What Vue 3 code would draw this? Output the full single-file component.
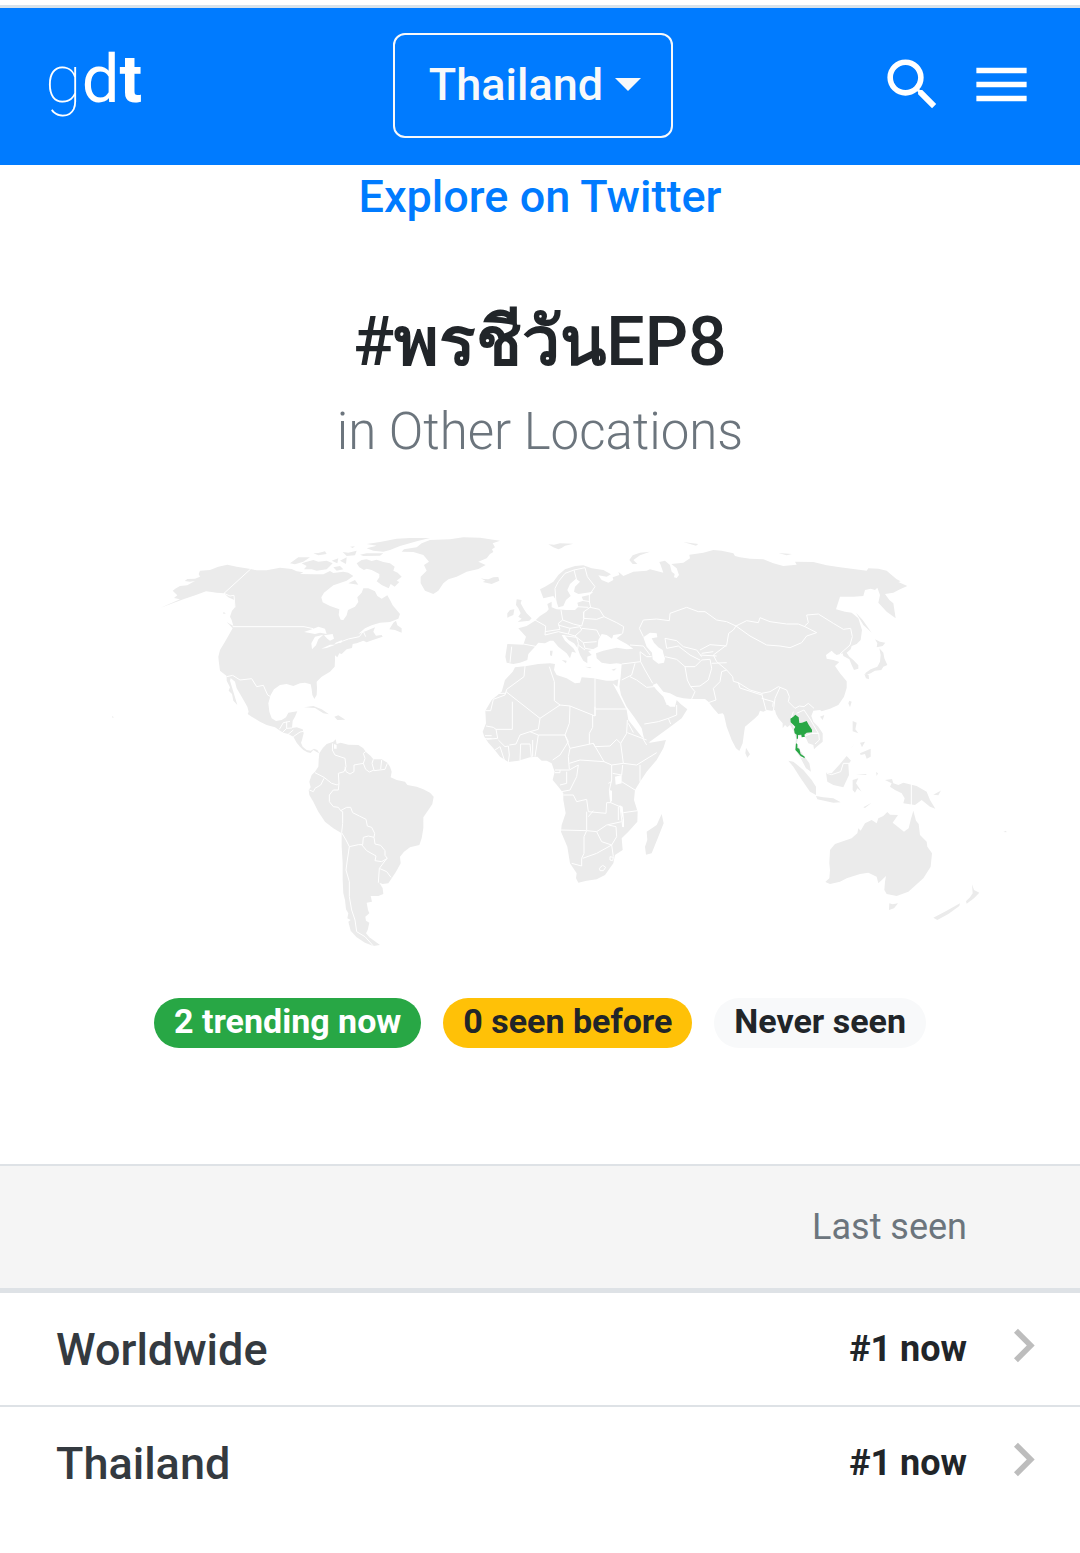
<template>
    <div class="page">
        <!-- Navbar -->
        <header class="navbar">
            <a href="#" class="brand"><span class="thin">g</span>d<b>t</b></a>
            <button type="button" class="location-toggle">
                Thailand
                <span class="caret"></span>
            </button>
            <div class="actions">
                <button type="button" class="icon-button" aria-label="Search">
                    <svg viewBox="0 0 24 24">
                        <path d="M15.5 14h-.79l-.28-.27A6.47 6.47 0 0 0 16 9.5 6.5 6.5 0 1 0 9.5 16c1.61 0 3.09-.59 4.23-1.57l.27.28v.79l5 4.99L20.49 19l-4.99-5zm-6 0C7.01 14 5 11.99 5 9.5S7.01 5 9.5 5 14 7.01 14 9.5 11.99 14 9.5 14z" />
                    </svg>
                </button>
                <button type="button" class="icon-button" aria-label="Menu">
                    <svg viewBox="0 0 24 24">
                        <path d="M3 18h18v-2H3v2zm0-5h18v-2H3v2zm0-7v2h18V6H3z" />
                    </svg>
                </button>
            </div>
        </header>

        <main>
            <a href="#" class="explore">Explore on Twitter</a>

            <h1>#<b>พรชีวัน</b>EP8</h1>
            <p class="subtitle">in Other Locations</p>

            <!-- World map -->
            <svg class="map" viewBox="-180 0 3000 1320" role="img" aria-label="World map">
                <g v-for="region in regions" :key="region.name" :transform="`translate(${region.x} ${region.y})`">
                    <path class="land" :d="region.land" />
                    <path v-if="region.water" class="water" :d="region.water" />
                    <path v-if="region.borders" class="border" :d="region.borders" />
                    <path v-if="region.trending" class="trending" :d="region.trending" />
                </g>
            </svg>

            <!-- Legend -->
            <div class="legend">
                <span v-for="badge in badges" :key="badge.type" class="badge" :class="badge.type">{{ badge.label }}</span>
            </div>

            <table class="locations">
                <thead>
                    <tr>
                        <th></th>
                        <th class="seen">Last seen</th>
                        <th class="go"></th>
                    </tr>
                </thead>
                <tbody>
                    <tr v-for="location in locations" :key="location.name">
                        <td class="name"><a href="#">{{ location.name }}</a></td>
                        <td class="seen">{{ location.seen }}</td>
                        <td class="go">
                            <a href="#" :aria-label="`Open ${location.name}`">
                                <svg viewBox="0 0 24 24">
                                    <path d="M10 6 8.59 7.41 13.17 12l-4.58 4.59L10 18l6-6z" />
                                </svg>
                            </a>
                        </td>
                    </tr>
                </tbody>
            </table>
        </main>
    </div>
</template>

<script setup>
const badges = [
    { type: 'success', label: '2 trending now' },
    { type: 'warning', label: '0 seen before' },
    { type: 'light', label: 'Never seen' },
];

const locations = [
    { name: 'Worldwide', seen: '#1 now' },
    { name: 'Thailand', seen: '#1 now' },
];

// Map shapes, every region has its own origin
const regions = [
    {
        name: 'north-america',
        x: 0,
        y: 0,
        land: `M218,212 228,205 240,198 262,196 275,188 285,183 270,185 254,183 262,177 285,176 300,170 296,162 300,152 330,150 355,140
            382,134 410,140 452,147 470,151 500,151 540,143 575,147 590,154 610,157 600,162 640,163 670,163 690,153 700,159 730,155 745,158
            760,168 740,182 718,190 700,196 685,208 672,218 664,232 668,247 690,258 718,268 716,285 722,299 730,300 740,286 744,270 765,260
            775,246 772,232 785,218 790,205 805,205 825,214 832,228 845,236 862,226 870,240 878,256 890,270 900,282 895,296 870,306 840,308
            815,316 795,325 775,342 800,332 825,322 820,335 828,347 845,345 848,350 812,362 800,367 790,362 770,370 758,372 756,384 740,388 725,402
            718,400 712,412 705,406 705,420 704,440 690,455 665,470 650,485 651,505 650,525 643,537 637,525 635,508 632,493 615,488 600,490
            580,498 560,492 540,495 522,508 512,525 505,550 508,575 515,595 528,603 545,600 558,592 565,578 592,574 585,590 578,602 576,624
            590,622 608,628 611,640 606,660 603,668 608,680 620,690 632,692 642,686 652,690 658,700 650,696 640,690 632,699 622,697 610,690
            600,680 590,668 580,650 565,642 550,638 540,632 525,622 500,615 480,605 455,590 443,582 446,575 442,560 425,530 410,505 405,485
            392,474 390,482 400,515 412,555 400,542 396,522 386,512 390,502 380,482 380,468 360,452 357,430 355,410 360,390 375,365 392,335
            398,325 380,306 400,318 395,300 390,290 396,272 405,262 403,240 385,232 372,220 350,218 335,216 318,214 290,224 250,238 180,264 240,238
            222,234 232,226Z
            M800,85 830,77 800,72 840,66 890,56 930,54 990,54 950,64 900,78 870,90 850,95 820,92Z M770,130 785,120 800,118 815,123 830,119 850,126 870,130
            884,140 880,152 893,158 905,170 890,182 898,186 884,200 872,192 866,205 845,195 830,184 838,172 838,162 815,150 800,146 792,150 778,142Z M605,130 618,126 640,120
            655,125 680,122 698,130 690,138 680,148 650,152 635,148 612,148 620,138Z M570,130 595,112 630,112 610,125 585,133Z M695,122 715,115 712,130Z M720,122
            740,112 738,132Z M640,100 655,99 675,94 680,102 655,106Z M700,142 720,138 730,148 710,152Z M728,96 745,98 770,92 765,106 740,108Z M780,104 800,100 850,100 840,107 790,108Z M750,80
            765,79 758,84Z M745,190 765,180 775,194Z M868,328 880,308 888,302 892,316 905,325 905,338 885,330Z M612,562 640,558
            665,568 687,583 670,580 645,564Z M703,590 715,586 736,599 712,600Z M745,600 756,602Z M658,600 670,604Z M36,588 42,592
            37,593Z M370,276 378,280 370,282Z M905,95 912,88 950,82 965,70 990,60 1050,58 1090,52 1140,53 1200,62 1178,70 1185,82
            1176,88 1180,96 1170,102 1160,115 1135,125 1157,135 1135,147 1100,155 1070,170 1045,178 1030,190 1015,212 1000,222 975,212 962,190 962,170
            980,152 972,135 987,125 970,105 940,96Z`,
        water: `M612,336 640,326 655,320 675,326 680,342 660,338 645,342Z M636,388 634,370 645,350 670,344 655,358 648,376Z
            M672,346 698,342 702,356 690,362 682,356Z M664,386 690,374 706,374 680,384Z M704,370 726,360 724,368Z`,
        borders: `M452,147 372,220 390,228 402,226 405,262 M398,320H612L640,326 M704,372 745,357 778,350 790,334 797,350
            M380,470 398,466 420,480 455,476 470,500 490,496 503,525 512,530 M538,628 550,608 570,604 M560,605 560,625 576,624
            M545,640 560,625 M562,645 580,630 M580,650 600,636 611,634`,
    },
    {
        name: 'south-america',
        x: 0,
        y: 540,
        land: `M658,160 668,145 680,132 700,125 707,118 710,132 722,128 745,134 775,135 790,145 797,155 812,168 820,178 845,178
            862,188 870,200 875,215 872,232 890,240 915,245 922,255 950,260 970,268 990,278 1001,290 997,312 985,330 970,352 970,385 965,415
            958,435 930,442 912,455 900,470 902,490 888,515 875,535 865,550 848,552 838,548 848,565 850,582 835,588 812,588 816,605 800,608
            804,630 808,640 796,650 798,662 808,668 803,690 798,700 808,712 840,735 820,738 795,728 770,712 752,692 745,665 752,660 742,655
            745,640 738,628 735,600 730,580 728,540 728,490 725,440 725,400 700,385 675,365 655,335 640,305 628,285 626,270 632,262 628,245
            635,225 645,215 655,200 656,180Z`,
        water: 'M702,132 710,135 710,146 702,146Z',
        borders: `M698,130 697,150 705,165 735,175 738,200 732,215 715,220 717,250 712,255 695,250 672,232 645,218 M672,235
            662,255 645,265 640,275 628,270 M717,250 715,270 700,270 688,285 688,305 700,320 715,322 722,332 728,335 728,370 725,398
            M722,332 740,322 752,322 758,338 778,348 798,358 802,378 815,382 824,400 822,412 M725,398 738,420 748,440 775,434 788,434
            790,412 805,408 822,412 825,432 842,436 855,452 855,466 862,475 845,485 825,482 828,468 800,452 785,434 M748,440 742,480
            738,510 748,545 748,590 755,630 765,660 770,695 795,710 820,738 M860,476 838,505 835,548 M838,505 860,515 873,532 M735,200
            738,215 750,222 762,215 762,195 790,190 795,175 790,160 797,155 M790,190 797,208 808,216 822,210 816,190 820,178 M822,212 855,208
            862,190 M845,180 842,207`,
    },
    {
        name: 'eurasia',
        x: 1050,
        y: 0,
        land: `M270,208 285,200 310,185 325,165 345,148 375,138 400,136 425,145 460,150 483,163 470,170 445,166 455,180 475,188
            490,180 488,172 508,165 505,155 520,168 550,155 590,152 600,148 640,158 632,135 628,126 645,122 660,135 665,155 674,162 672,172
            680,174 687,165 680,145 664,132 700,128 720,115 718,104 760,98 790,90 815,92 850,100 855,108 870,112 900,116 940,118
            970,130 1000,138 1040,134 1035,125 1090,126 1130,136 1170,142 1250,152 1255,145 1285,146 1310,152 1340,178 1352,184 1345,186 1372,198 1350,208
            1330,218 1305,222 1318,240 1330,250 1337,295 1310,275 1285,248 1290,225 1282,203 1275,210 1262,206 1245,210 1240,228 1210,230
            1170,230 1158,268 1185,275 1205,278 1225,295 1236,330 1232,360 1220,372 1205,378 1202,388 1190,398 1198,410 1210,420 1225,436
            1225,446 1212,450 1205,435 1198,418 1180,408 1178,400 1160,405 1152,400 1145,392 1128,405 1130,416 1150,420 1168,426 1155,438
            1170,460 1190,484 1190,504 1182,530 1165,555 1140,566 1115,574 1110,570 1090,572 1084,588 1090,605 1105,620 1118,640 1118,665
            1100,680 1092,688 1090,675 1075,670 1068,655 1060,648 1046,648 1040,670 1050,690 1065,712 1078,730 1083,755 1068,745 1055,720
            1040,695 1036,675 1038,655 1032,635 1020,615 1012,622 1005,615 998,625 998,610 985,595 978,582 975,570 965,572 950,570 940,575
            930,572 925,585 915,595 885,620 882,640 878,670 868,693 858,685 845,660 830,620 822,585 818,580 805,582 790,565 775,545 765,537
            725,537 700,535 680,530 660,520 640,515 620,490 608,495 620,510 640,530 648,550 660,560 675,560 680,540 692,552 712,568 695,595
            655,625 590,672 583,660 575,625 555,595 530,560 513,525 508,500 512,470 515,432 500,430 480,432 455,428 440,415 438,400 460,392
            500,383 530,388 550,386 530,372 508,360 500,355 520,340 505,343 490,345 486,356 470,345 455,342 445,360 443,380 425,390 415,394
            425,405 412,410 412,430 400,422 390,405 383,385 372,370 355,360 343,345 335,345 345,362 370,385 378,398 366,395 360,415 350,400
            325,380 310,362 300,362 285,370 265,368 255,380 235,402 232,420 210,428 190,432 170,428 166,410 172,372 220,374 228,350 205,325
            230,318 255,302 270,288 290,275 296,268 292,252 305,245 305,262 320,268 350,270 375,270 385,260 382,248 400,242 395,230 420,224
            430,215 385,222 372,215 375,200 390,185 378,176 360,192 352,210 362,228 348,240 340,258 325,262 318,240 310,228 280,235Z
            M200,238 215,240 212,250 222,268 230,280 245,295 238,302 203,306 215,296 205,290 212,280 205,265 198,255Z M180,270 193,268
            190,285 172,293 172,280Z M92,175 102,177 115,178 130,172 145,171 148,182 125,192 98,186 106,182Z M295,73 312,74 330,70 370,71 345,77 335,84 325,88 310,82Z M600,95 570,98
            548,106 538,120 548,132 562,132 550,120 570,106Z M335,420 350,422 348,430Z M300,392 308,392 306,408 300,406Z M405,440 425,442
            420,445Z M484,449 500,445 492,452Z M700,66 745,72 738,77Z M760,78 775,80Z M985,99 1026,102 1010,106Z M1275,358 1290,365 1306,368
            1298,378 1280,382 1282,370Z M1288,385 1300,398 1303,415 1312,435 1300,440 1294,450 1275,452 1262,460 1250,464 1245,460 1262,448 1282,440 1290,425 1292,405Z M1243,462
            1256,465 1257,478 1248,475Z M1218,278 1238,300 1265,338 1240,315Z M1272,332 1280,338Z M1198,542 1205,545 1200,562 1195,550Z
            M1110,590 1123,585 1118,600Z M888,683 900,703 892,713 886,700Z`,
        water: `M580,352 600,338 620,340 622,352 605,355 612,368 625,382 638,390 640,400 645,415 642,428 625,431 608,418 606,398
            590,380Z`,
        borders: `M400,295 440,298 462,290 500,308 521,320 518,340 M400,295 402,275 420,262 448,268 462,290 M580,350 568,325
            580,300 620,297 658,302 660,280 710,262 745,275 765,275 800,300 830,305 858,318 890,302 925,308 930,293 960,305 1010,312
            1045,312 1065,320 1100,338 1070,348 1055,368 1020,383 990,378 950,375 900,348 858,318 M1064,318 1075,308 1070,285 1105,282
            1150,310 1180,328 1202,325 1207,350 1200,375 1170,402 M858,318 850,330 836,340 830,375 790,405 800,425 830,450 848,470 850,484
            865,488 900,510 935,520 960,515 985,500 1010,510 1018,530 1015,545 1035,565 1048,558 1062,560 1075,550 1092,565 M935,520
            940,540 948,570 M935,535 970,545 968,560 M990,502 975,535 970,575 M865,488 870,504 935,525 M830,450 815,455 810,485 790,505 798,540
            775,548 M705,440 735,440 755,420 780,418 785,445 775,480 750,498 722,500 712,480 705,440 M722,500 735,515 725,537 M645,410
            680,418 705,440 M650,385 645,355 680,362 700,380 740,390 755,410 M650,385 685,378 720,405 750,420 M750,390 780,374 830,378
            M755,400 790,395 M750,405 800,408 M785,430 830,428 M570,395 572,425 515,432 M540,375 580,378 600,405 M570,395 590,410 605,410 M572,425
            585,450 608,490 M555,430 545,465 515,480 M540,470 560,480 590,502 612,500 M583,612 625,605 655,595 680,585 680,555 M655,595
            662,612 M648,552 675,558 M318,250 315,205 325,185 345,160 372,150 380,180 M372,150 405,143 412,170 435,200 420,222 M285,345 287,318
            255,300 M220,372 262,380 M185,380 180,428 M333,270 338,300 325,310 330,328 285,335 M338,300 370,312 395,318 402,295
            400,275 M285,345 325,335 355,342 360,325 325,315 M355,342 375,348 395,330 390,320 360,325 M395,325 440,330 450,350 M375,348
            400,368 440,365 M340,347 380,352 385,370 383,388 M400,368 405,385 435,390 M385,375 405,390 M390,240 420,245 M380,260 415,262 M418,222 418,245
            422,262 M1040,580 1062,570 1082,600 1105,640 1085,640 1060,650 M1085,640 1106,640 1108,660 1095,672 M1030,575 1022,600 1034,625 M1052,712 1066,712`,
    },
    {
        name: 'africa',
        x: 1050,
        y: 360,
        land: `M195,82 230,78 265,72 300,70 315,72 312,90 320,105 350,115 375,130 390,128 395,112 430,115 470,122 490,122 505,118
            502,140 488,130 510,170 530,210 535,240 555,265 575,290 588,302 600,308 648,300 640,325 620,360 590,395 570,425 555,450 552,480
            563,515 562,545 535,575 515,595 518,630 495,645 490,670 465,705 440,718 410,722 385,728 378,715 380,700 360,670 352,620 333,575
            335,555 347,520 340,480 340,460 325,440 308,420 314,395 305,370 290,362 275,362 262,350 240,352 205,362 175,366 150,350 130,325
            115,308 103,290 98,275 108,250 106,212 125,180 155,155 165,120 188,95Z M635,522 641,550 625,590 605,640 588,644 585,620 592,600
            590,575 620,555Z`,
        water: `M495,410 515,405 515,430 497,434Z M478,450 486,452 486,486 480,478Z M508,495 518,500 522,540 522,562 516,560 518,535Z`,
        borders: `M225,78 222,110 170,148 165,165 130,178 122,212H106 M168,155 270,235 330,195 313,182V125L298,80 M145,160H168
            M330,195 360,198 435,228V115 M437,207H530 M435,228V200 M428,225 428,262 418,280 418,312 M187,185V268H138L130,262 108,258
            M270,235 265,268 240,275 210,285 198,312 178,315 M138,268 143,295 110,298 M360,198 358,250 345,285 265,285 240,275 M265,285
            255,350 M345,285 360,325 430,310 435,320 480,318 500,298 512,310 530,280 532,240 M345,285 355,305 330,345 308,360 M360,325 355,350 358,388
            M430,310 462,365 485,375 520,370 512,310 M358,370 390,360 462,365 M485,375 485,420 478,450 482,488 510,500 518,560 M315,390H358L385,375
            380,410 360,450 335,455 M315,398H330V390 M350,395 350,430 330,435 M340,465H370L380,485 410,478 415,515 468,520 470,488 482,488
            M410,515V570 M333,570 410,572 440,575 470,555 515,545 M410,572 402,590V640L395,655V678L365,670 M398,655 440,640 485,615
            490,650 M440,575 455,605 485,615 500,590 498,560 475,555 M415,530 430,512 M505,500 505,540 M520,518 563,512 M520,370 560,375
            620,338 M532,278 590,300 M570,375V425 M515,425 555,450 M488,400 515,405 518,375 M535,250 550,278 M578,295 590,315 M210,360 212,312H240L244,352 M248,300V350 M175,318
            178,345 175,366 M145,300 165,320 175,318 M135,330 150,320 165,366 M105,287H125 M105,296H125 M475,430 485,425 M448,685
            458,676 467,682 460,692 450,692Z M480,650 490,652 488,662 480,660Z`,
    },
    {
        name: 'oceania',
        x: 1800,
        y: 510,
        land: `M376,576 388,565 390,540 388,520 390,480 405,462 455,445 472,430 475,415 482,422 495,400 515,390 530,400 535,385
            550,378 562,366 570,374 594,375 578,398 612,425 626,415 632,390 640,362 648,392 656,402 660,435 680,455 682,470 696,490 692,530
            670,565 625,605 590,618 560,612 553,600 555,575 558,558 535,580 530,560 505,548 480,552 440,565 420,575 390,582Z M568,640
            578,643 594,640 582,655 567,660Z M700,683 740,662 780,640 778,648 745,672 712,690Z M816,583 822,600 838,608 822,625 800,641 798,634 810,622
            818,610Z M555,270 576,267 580,280 595,285 610,278 650,288 680,305 690,330 706,356 690,350 665,330 645,345 610,340 614,325
            605,310 585,300 570,290 575,280Z M378,248 395,250 420,222 440,198 453,212 445,222 447,255 430,292 400,285 382,275Z M265,212
            280,215 310,240 335,270 348,290 348,315 330,305 300,262 280,230Z M348,318 370,322 400,325 422,337 400,338 352,328Z M458,270
            475,265 468,280 485,305 472,295 465,308 458,300Z M468,253 500,252 498,255Z M458,93 470,98 466,118 475,130 458,124Z M480,190
            512,176 512,200 500,206 495,192 482,195Z M475,138 488,146Z M480,158 495,155 486,172Z M498,152 502,166Z M455,172 466,158 452,176Z
            M528,246 534,250 530,258Z M515,292 550,290Z M490,352 515,338 495,354Z M440,340 480,343Z M700,314 722,302 725,298 715,316Z M805,455 814,462Z
            M910,426 918,422 920,427Z M832,400 836,402Z M868,703 874,708Z`,
        borders: 'M634,282V345 M380,250 395,254 422,245 430,220H448',
        trending: `M271,86 280,80 286,74 296,82 298,99 306,98 320,93 326,104 336,119 336,127 320,128 313,134 315,140 305,142 304,134
            294,135 294,146 290,146 290,134 284,130 282,118 286,110 272,97Z M288,160 292,162 292,174 298,176 302,192 314,200 314,205
            302,198 292,186 286,180Z`,
    },
];
</script>

<style>
body {
    margin: 0;
    background: #fff;
}
</style>

<style scoped>
.page {
    font-family: Roboto, 'Noto Sans', sans-serif;
    color: #212529;
    padding-top: 5px;
}

a {
    color: inherit;
    text-decoration: none;
}

button {
    font: inherit;
    color: inherit;
    background: none;
    border: 0;
    padding: 0;
    cursor: pointer;
}

svg {
    display: block;
    fill: currentColor;
}

/* Navbar */
.navbar {
    display: grid;
    grid-template-columns: 1fr auto 1fr;
    align-items: center;
    padding: 25px 45px 27px;
    border-top: 3px solid #d8e2ea;
    background: #007bff;
    color: #fff;
}

.brand {
    font-size: 67px;
    line-height: 76px;
    padding-bottom: 14px;
}

.brand .thin {
    font-weight: 100;
}

.brand b {
    font-weight: 700;
}

.location-toggle {
    display: flex;
    align-items: center;
    gap: 12px;
    margin-right: 14px;
    padding: 15px 30px 17px 34px;
    border: 2px solid #f8f9fa;
    border-radius: 12px;
    color: #f8f9fa;
    font-size: 45px;
    font-weight: 500;
    line-height: 69px;
}

.caret {
    border: 13px solid transparent;
    border-top-color: currentColor;
    border-bottom: 0;
}

.actions {
    display: flex;
    justify-content: flex-end;
    gap: 22px;
    padding-bottom: 2px;
}

.icon-button svg,
.go svg {
    width: 67px;
    height: 67px;
}

/* Trend */
.explore {
    display: block;
    padding-top: 2px;
    color: #007bff;
    font-size: 45px;
    font-weight: 500;
    line-height: 60px;
    text-align: center;
}

h1 {
    margin: 75px 0 20px;
    font-size: 68px;
    font-weight: 500;
    line-height: 80px;
    text-align: center;
}

h1 b {
    font-weight: 700;
}

.subtitle {
    margin: 0;
    color: #6c757d;
    font-size: 51px;
    font-weight: 300;
    line-height: 60px;
    text-align: center;
}

.map {
    box-sizing: border-box;
    width: 100%;
    margin: 58px 0 38px;
    padding: 0 40px;
}

.land {
    fill: #ebebeb;
}

.water {
    fill: #fff;
}

.border {
    fill: none;
    stroke: #fff;
    stroke-width: 3;
    stroke-linejoin: round;
}

.trending {
    fill: #28a745;
}

.legend {
    display: flex;
    flex-wrap: wrap;
    justify-content: center;
    gap: 22px;
    margin-bottom: 116px;
}

.badge {
    padding: 0 20px 4px;
    border-radius: 28px;
    font-size: 34px;
    font-weight: 700;
    line-height: 46px;
}

.success {
    background: #28a745;
    color: #fff;
}

.warning {
    background: #ffc107;
}

.light {
    background: #f8f9fa;
}

/* Locations */
.locations {
    width: 100%;
    border-collapse: collapse;
    font-size: 36px;
}

th,
td {
    height: 112px;
    padding: 0;
    border-top: 2px solid #dee2e6;
    font-weight: 700;
}

th {
    height: 122px;
    border-bottom: 5px solid #dee2e6;
    background: #f5f5f5;
    color: #6c757d;
    font-weight: 400;
}

.name {
    padding-left: 56px;
    color: #343a40;
    font-size: 45px;
    font-weight: 500;
}

.seen {
    text-align: right;
}

.go {
    width: 113px;
    color: #bdbdbd;
}

.go svg {
    margin: 0 auto 8px;
}
</style>
